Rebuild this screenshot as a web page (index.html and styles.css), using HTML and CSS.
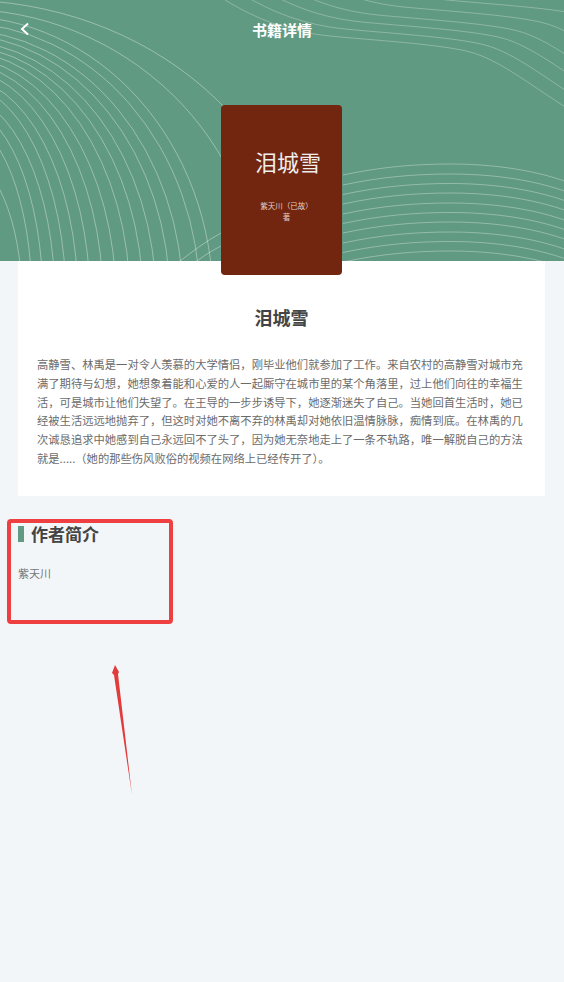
FILE: index.html
```html
<!DOCTYPE html>
<html lang="zh-CN">
<head>
<meta charset="utf-8">
<title>书籍详情</title>
<link rel="stylesheet" href="styles.css">
</head>
<body>
<div class="page">
  <header class="hero">
    <svg class="hero-bg" viewBox="0 0 564 261" preserveAspectRatio="none" aria-hidden="true">
      <g class="arcs">
        <ellipse cx="-40" cy="300" rx="62" ry="144"/>
        <ellipse cx="-40" cy="300" rx="72" ry="180"/>
        <ellipse cx="-40" cy="300" rx="83" ry="194"/>
        <ellipse cx="-40" cy="300" rx="95" ry="204"/>
        <ellipse cx="-40" cy="300" rx="106" ry="216"/>
        <ellipse cx="-40" cy="300" rx="118" ry="223"/>
        <ellipse cx="-40" cy="300" rx="130" ry="231"/>
        <ellipse cx="-40" cy="300" rx="143" ry="237"/>
        <ellipse cx="-40" cy="300" rx="156" ry="243"/>
        <ellipse cx="-40" cy="300" rx="170" ry="249"/>
        <ellipse cx="-40" cy="300" rx="183" ry="254"/>
        <ellipse cx="-40" cy="300" rx="196" ry="259"/>
        <ellipse cx="-40" cy="300" rx="210" ry="265"/>
        <ellipse cx="-40" cy="300" rx="223" ry="270"/>
        <ellipse cx="-40" cy="300" rx="240" ry="277"/>
        <ellipse cx="-40" cy="300" rx="253" ry="284"/>
        <ellipse cx="-40" cy="300" rx="300" ry="291"/>
        <ellipse cx="-40" cy="300" rx="345" ry="300"/>
        <path d="M180 261C192 252 206 241 221 233"/>
        <path d="M197 261C205 255 213 250 221 246"/>
      </g>
      <defs>
        <path id="wave-top" d="M225 0C258 20 290 32 330 36S440 44 470 52S530 85 570 110"/>
        <path id="wave-low" d="M343 175C380 167 415 164 450 164S530 168 570 183"/>
      </defs>
      <g class="waves-top">
        <use href="#wave-top"/>
        <use href="#wave-top" x="15" y="-7"/>
        <use href="#wave-top" x="32" y="-14"/>
        <use href="#wave-top" x="48" y="-21"/>
        <use href="#wave-top" x="74" y="-29"/>
        <use href="#wave-top" x="117" y="-36"/>
        <use href="#wave-top" x="160" y="-43"/>
        <use href="#wave-top" x="190" y="-50"/>
        <use href="#wave-top" x="215" y="-57"/>
        <use href="#wave-top" x="240" y="-64"/>
      </g>
      <g class="waves-low">
        <use href="#wave-low"/>
        <use href="#wave-low" y="10"/>
        <use href="#wave-low" y="19.5"/>
        <use href="#wave-low" y="29"/>
        <use href="#wave-low" y="39"/>
        <use href="#wave-low" y="48.5"/>
        <use href="#wave-low" y="58"/>
        <use href="#wave-low" y="68"/>
        <use href="#wave-low" y="77.5"/>
        <use href="#wave-low" y="87"/>
      </g>
    </svg>
    <nav class="nav">
      <svg class="back" viewBox="0 0 12 16" aria-label="返回"><path d="M9 2.5L3 8l6 5.5"/></svg>
      <h1 class="nav-title">书籍详情</h1>
    </nav>
    <div class="cover">
      <div class="cover-title">泪城雪</div>
      <div class="cover-author">紫天川（已故）<br>著</div>
    </div>
  </header>

  <section class="card">
    <h2 class="book-title">泪城雪</h2>
    <p class="summary">高静雪、林禹是一对令人羡慕的大学情侣，刚毕业他们就参加了工作。来自农村的高静雪对城市充满了期待与幻想，她想象着能和心爱的人一起厮守在城市里的某个角落里，过上他们向往的幸福生活，可是城市让他们失望了。在王导的一步步诱导下，她逐渐迷失了自己。当她回首生活时，她已经被生活远远地抛弃了，但这时对她不离不弃的林禹却对她依旧温情脉脉，痴情到底。在林禹的几次诚恳追求中她感到自己永远回不了头了，因为她无奈地走上了一条不轨路，唯一解脱自己的方法就是.....（她的那些伤风败俗的视频在网络上已经传开了）。</p>
  </section>

  <section class="author">
    <h3 class="author-heading">作者简介</h3>
    <p class="author-name">紫天川</p>
  </section>

  <div class="mark-box"></div>
  <svg class="mark-arrow" viewBox="0 0 30 140" aria-hidden="true">
    <path d="M5 0L9 7 8 9 22 130 4 10 2 8z"/>
  </svg>
</div>
</body>
</html>
```

FILE: styles.css
```css
* { box-sizing: border-box; }
html, body { margin: 0; padding: 0; }
body {
  background: #f3f6f8;
  font-family: "Noto Sans CJK SC", "Noto Sans", sans-serif;
}
.page {
  position: relative;
  width: 564px;
  height: 982px;
  overflow: hidden;
}
.hero {
  position: relative;
  height: 261px;
  background: #619a83;
  display: flex;
  flex-direction: column;
  align-items: center;
}
.hero-bg {
  position: absolute;
  inset: 0;
  width: 100%;
  height: 100%;
  filter: blur(.3px);
}
.arcs ellipse, .arcs path {
  fill: none;
  stroke: rgba(255, 255, 255, .36);
  stroke-width: 1;
}
.waves-top use {
  fill: none;
  stroke: rgba(255, 255, 255, .28);
  stroke-width: 1;
}
.waves-low use {
  fill: none;
  stroke: rgba(255, 255, 255, .32);
  stroke-width: 1;
}
.nav {
  position: relative;
  flex: none;
  width: 100%;
  height: 60px;
  display: flex;
  justify-content: center;
  align-items: center;
}
.back {
  position: absolute;
  left: 19px;
  top: 21px;
  width: 12px;
  height: 16px;
}
.back path {
  fill: none;
  stroke: #fff;
  stroke-width: 2;
}
.nav-title {
  margin: 0;
  font-size: 15px;
  font-weight: 700;
  line-height: 20px;
  color: #fff;
}
.cover {
  position: relative;
  flex: none;
  width: 121px;
  height: 170px;
  margin: 45px 1px 0 0;
  padding: 42px 0 0 13px;
  border-radius: 4px;
  background: #72260f;
  text-align: center;
  color: #eee;
}
.cover-title {
  font-size: 22px;
  line-height: 28px;
}
.cover-author {
  margin-top: 25px;
  padding-right: 3px;
  font-size: 7.5px;
  line-height: 11px;
  color: #e3cfc8;
}
.card {
  margin: 0 19px 0 18px;
  height: 235px;
  padding: 43px 19px 0;
  background: #fff;
}
.book-title {
  margin: 0;
  font-size: 18px;
  font-weight: 700;
  line-height: 26px;
  text-align: center;
  color: #444;
}
.summary {
  margin: 25px 0 0;
  width: 490px;
  font-size: 11.3px;
  line-height: 18.8px;
  color: #6b6b6b;
}
.author {
  padding: 27px 18px 0;
}
.author-heading {
  margin: 0;
  padding-left: 13px;
  font-size: 17px;
  font-weight: 700;
  line-height: 22px;
  color: #444;
  background: linear-gradient(#619a83, #619a83) left center / 6px 16px no-repeat;
}
.author-name {
  margin: 19px 0 0;
  font-size: 11px;
  line-height: 18px;
  color: #777;
}
.mark-box {
  position: absolute;
  left: 7px;
  top: 519px;
  width: 166px;
  height: 105px;
  border: 4px solid #ee4040;
  border-radius: 4px;
}
.mark-arrow {
  position: absolute;
  left: 110px;
  top: 665px;
  width: 30px;
  height: 140px;
}
.mark-arrow path {
  fill: #e23b3b;
}
```
